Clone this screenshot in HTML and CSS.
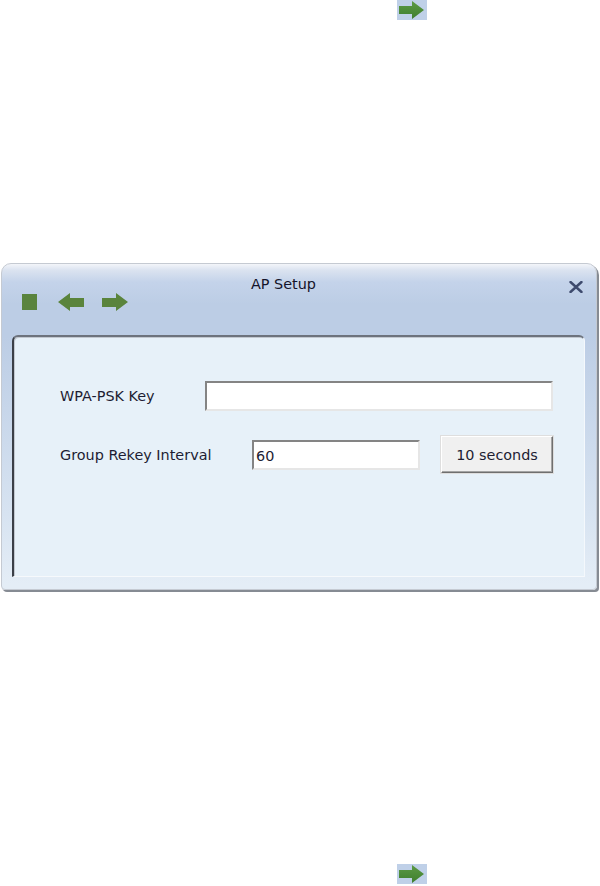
FILE: index.html
```html
<!DOCTYPE html>
<html>
<head>
<meta charset="utf-8">
<link rel="stylesheet" href="styles.css">
</head>
<body>
<div class="page">
  <div class="nav-arrow">
    <svg width="30" height="20" viewBox="0 0 30 20"><defs><linearGradient id="g1" x1="0" y1="0" x2="0" y2="1"><stop offset="0" stop-color="#5c9a45"/><stop offset="1" stop-color="#3f7f2e"/></linearGradient></defs><polygon points="2,6 15,6 15,1 27,10 15,19 15,14 2,14" fill="url(#g1)"/></svg>
  </div>

  <div class="window">
    <div class="titlebar">
      <div class="tools">
        <span class="stop"></span>
        <svg class="tool-arrow" width="26" height="20" viewBox="0 0 26 20"><polygon points="0,10 12,1 12,6 26,6 26,15 12,15 12,19" fill="#5a843c"/></svg>
        <svg class="tool-arrow" width="26" height="20" viewBox="0 0 26 20"><polygon points="26,10 14,1 14,6 0,6 0,15 14,15 14,19" fill="#5a843c"/></svg>
      </div>
      <div class="title">AP Setup</div>
      <svg class="close" width="14" height="12" viewBox="0 0 14 12"><path d="M1.5 1 L12.5 11 M12.5 1 L1.5 11" stroke="#3d4a6d" stroke-width="2.4" stroke-linecap="round"/></svg>
    </div>
    <div class="panel">
      <div class="row row-key">
        <span class="label label-key">WPA-PSK Key</span>
        <div class="field field-key"></div>
      </div>
      <div class="row row-rekey">
        <span class="label label-rekey">Group Rekey Interval</span>
        <div class="field field-rekey">60</div>
        <div class="button">10 seconds</div>
      </div>
    </div>
  </div>

  <div class="nav-arrow nav-arrow-bottom">
    <svg width="30" height="20" viewBox="0 0 30 20"><defs><linearGradient id="g2" x1="0" y1="0" x2="0" y2="1"><stop offset="0" stop-color="#5c9a45"/><stop offset="1" stop-color="#3f7f2e"/></linearGradient></defs><polygon points="2,6 15,6 15,1 27,10 15,19 15,14 2,14" fill="url(#g2)"/></svg>
  </div>
</div>
</body>
</html>
```
FILE: styles.css
```css
html, body {
  margin: 0;
  padding: 0;
  background: #ffffff;
}

.page {
  width: 600px;
  height: 886px;
  overflow: hidden;
  font-family: "DejaVu Sans", Verdana, sans-serif;
  font-size: 14.4px;
  color: #1d1d33;
}

.nav-arrow {
  margin-left: 397px;
  width: 30px;
  height: 20px;
  background: #bfd0e8;
}

.nav-arrow svg {
  display: block;
}

.nav-arrow-bottom {
  margin-top: 274px;
}

.window {
  box-sizing: border-box;
  margin-top: 243px;
  margin-left: 1px;
  width: 596px;
  height: 327px;
  border: 1px solid #c5cad2;
  border-radius: 10px 10px 4px 4px;
  background: linear-gradient(to bottom, #f3f5f9 0px, #dbe3f0 6px, #c4d3ea 18px, #bccde5 40px, #bccde5 72px, #d7e3f1 250px, #e4edf6 320px);
  box-shadow: 2px 2px 0 #868b93, 1px 1px 0 #a9aeb6;
  display: flex;
  flex-direction: column;
}

.titlebar {
  height: 71px;
  display: flex;
  align-items: flex-start;
}

.tools {
  display: flex;
  align-items: center;
  gap: 0;
  padding-left: 20px;
  padding-top: 28px;
}

.stop {
  display: block;
  width: 15px;
  height: 16px;
  background: #5a843e;
}

.tool-arrow {
  display: block;
  margin-left: 21px;
}

.tool-arrow + .tool-arrow {
  margin-left: 18px;
}

.title {
  margin-left: 123px;
  padding-top: 12px;
  color: #14142a;
}

.close {
  display: block;
  margin-left: auto;
  margin-right: 13px;
  margin-top: 17px;
}

.panel {
  box-sizing: border-box;
  margin: 0 11px 0 10px;
  height: 242px;
  background: #e7f1f9;
  border-style: solid;
  border-width: 2px 1px 1px 2px;
  border-color: #6d737d #f4f8fc #f6f9fc #3b3f47;
  border-radius: 6px 6px 0 0;
  padding: 44px 0 0 46px;
  display: flex;
  flex-direction: column;
  gap: 25px;
  box-shadow: inset 1px 1px 0 #c2c8d0;
}

.row {
  display: flex;
  align-items: center;
}

.label-key {
  width: 145px;
}

.label-rekey {
  width: 192px;
}

.field {
  box-sizing: border-box;
  height: 30px;
  background: #ffffff;
  border-style: solid;
  border-width: 2px;
  border-color: #848484 #e6e6e6 #e6e6e6 #848484;
  padding: 4px 2px;
  line-height: 20px;
}

.field-key {
  width: 348px;
}

.field-rekey {
  width: 168px;
}

.button {
  box-sizing: border-box;
  margin-left: 21px;
  width: 112px;
  height: 37px;
  background: #f0f0f0;
  border: 1px solid;
  border-color: #ffffff #6f6f6f #6f6f6f #ffffff;
  box-shadow: inset -1px -1px 0 #a4a4a4, 0 0 0 1px #dedede;
  display: flex;
  align-items: center;
  justify-content: center;
}
```
